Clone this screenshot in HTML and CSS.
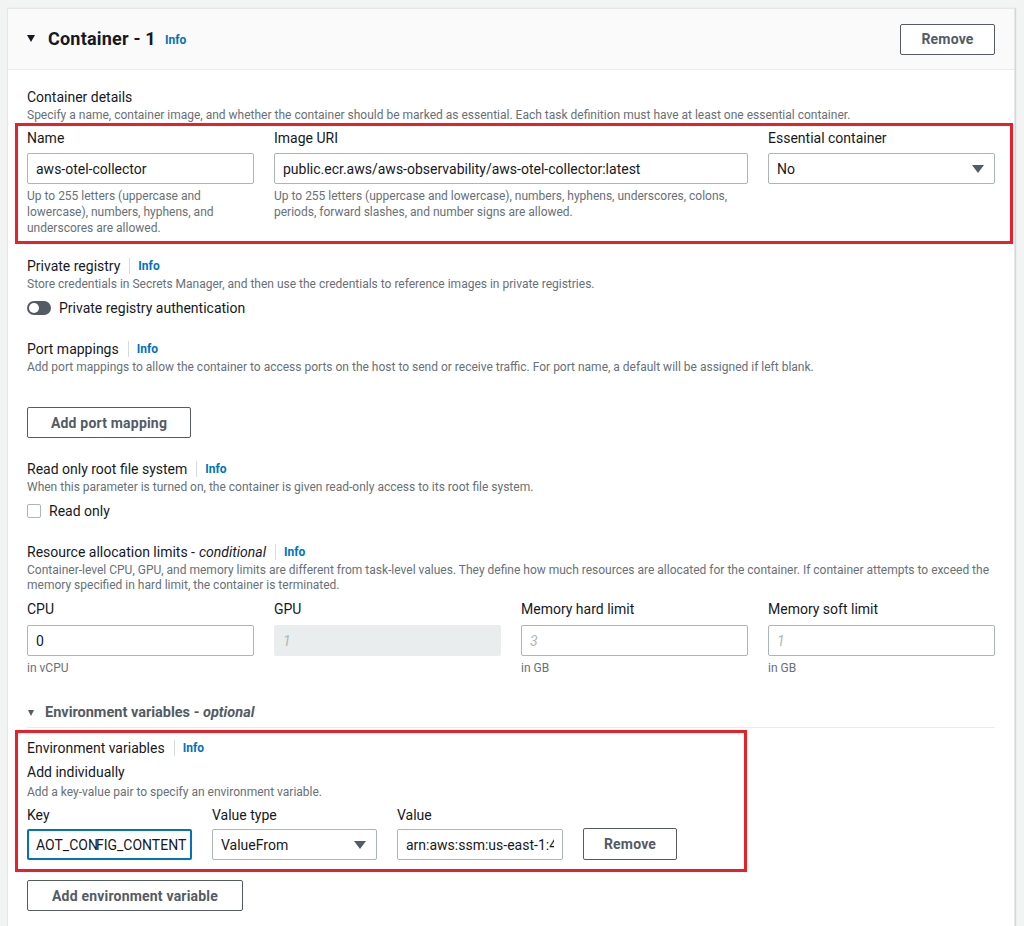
FILE: index.html
```html
<!DOCTYPE html>
<html lang="en">
<head>
    <meta charset="utf-8">
    <title>Container - 1</title>
    <link rel="stylesheet" href="styles.css">
</head>
<body>
    <div class="card">
        <div class="card-header">
            <div class="title">
                <span class="caret"></span>
                <h2>Container - 1</h2>
                <a class="info">Info</a>
            </div>
            <button class="btn">Remove</button>
        </div>

        <div class="card-body">
            <div class="section details">
                <div class="label">Container details</div>
                <div class="desc">Specify a name, container image, and whether the container should be marked as essential. Each task definition must have at least one essential container.</div>
            </div>

            <div class="highlight highlight-wide">
                <div class="grid">
                    <div class="field">
                        <div class="label">Name</div>
                        <input class="input" type="text" value="aws-otel-collector" readonly>
                        <div class="help">Up to 255 letters (uppercase and lowercase), numbers, hyphens, and underscores are allowed.</div>
                    </div>
                    <div class="field span-2">
                        <div class="label">Image URI</div>
                        <input class="input" type="text" value="public.ecr.aws/aws-observability/aws-otel-collector:latest" readonly>
                        <div class="help">Up to 255 letters (uppercase and lowercase), numbers, hyphens, underscores, colons, periods, forward slashes, and number signs are allowed.</div>
                    </div>
                    <div class="field">
                        <div class="label">Essential container</div>
                        <div class="select">
                            <span>No</span>
                            <svg class="arrow" width="12" height="8" viewBox="0 0 12 8"><path d="M0 0h12L6 8z" fill="#545b64"/></svg>
                        </div>
                    </div>
                </div>
            </div>

            <div class="section registry">
                <div class="label">Private registry <span class="sep"></span><a class="info">Info</a></div>
                <div class="desc">Store credentials in Secrets Manager, and then use the credentials to reference images in private registries.</div>
                <div class="option">
                    <span class="toggle"><span class="knob"></span></span>
                    <span>Private registry authentication</span>
                </div>
            </div>

            <div class="section ports">
                <div class="label">Port mappings <span class="sep"></span><a class="info">Info</a></div>
                <div class="desc">Add port mappings to allow the container to access ports on the host to send or receive traffic. For port name, a default will be assigned if left blank.</div>
                <button class="btn btn-block">Add port mapping</button>
            </div>

            <div class="section readonly">
                <div class="label">Read only root file system <span class="sep"></span><a class="info">Info</a></div>
                <div class="desc">When this parameter is turned on, the container is given read-only access to its root file system.</div>
                <div class="option">
                    <span class="checkbox"></span>
                    <span>Read only</span>
                </div>
            </div>

            <div class="section resources">
                <div class="label">Resource allocation limits - <em>conditional</em> <span class="sep"></span><a class="info">Info</a></div>
                <div class="desc desc-tight">Container-level CPU, GPU, and memory limits are different from task-level values. They define how much resources are allocated for the container. If container attempts to exceed the memory specified in hard limit, the container is terminated.</div>
                <div class="grid grid-resources">
                    <div class="field">
                        <div class="label">CPU</div>
                        <input class="input" type="text" value="0" readonly>
                        <div class="help">in vCPU</div>
                    </div>
                    <div class="field">
                        <div class="label">GPU</div>
                        <input class="input" type="text" placeholder="1" disabled>
                    </div>
                    <div class="field">
                        <div class="label">Memory hard limit</div>
                        <input class="input" type="text" placeholder="3" readonly>
                        <div class="help">in GB</div>
                    </div>
                    <div class="field">
                        <div class="label">Memory soft limit</div>
                        <input class="input" type="text" placeholder="1" readonly>
                        <div class="help">in GB</div>
                    </div>
                </div>
            </div>

            <div class="expander">
                <span class="caret caret-small"></span>
                <span>Environment variables - <em>optional</em></span>
            </div>

            <div class="highlight highlight-env">
                <div class="label">Environment variables <span class="sep"></span><a class="info">Info</a></div>
                <div class="label sub">Add individually</div>
                <div class="desc">Add a key-value pair to specify an environment variable.</div>
                <div class="env-row">
                    <div class="field">
                        <div class="label">Key</div>
                        <div class="input focused">AOT_CON<span class="text-caret"></span>FIG_CONTENT</div>
                    </div>
                    <div class="field">
                        <div class="label">Value type</div>
                        <div class="select">
                            <span>ValueFrom</span>
                            <svg class="arrow" width="12" height="8" viewBox="0 0 12 8"><path d="M0 0h12L6 8z" fill="#545b64"/></svg>
                        </div>
                    </div>
                    <div class="field">
                        <div class="label">Value</div>
                        <input class="input" type="text" value="arn:aws:ssm:us-east-1:4" readonly>
                    </div>
                    <div class="field field-btn">
                        <button class="btn">Remove</button>
                    </div>
                </div>
            </div>

            <button class="btn btn-block add-env">Add environment variable</button>
        </div>
    </div>
</body>
</html>
```

FILE: styles.css
```css
html,
body {
    padding: 0;
    margin: 0;
}

* {
    box-sizing: border-box;
}

body {
    background-color: #f2f3f3;
    font-family: Roboto, "Liberation Sans", sans-serif;
    color: #16191f;
    height: 926px;
    overflow: hidden;
}

.card {
    background-color: #fff;
    margin: 8px 0 0 7px;
    width: 1008px;
    min-height: 930px;
    border: 1px solid #e4e7e7;
    box-shadow: 1px 0 1px rgba(0, 28, 36, 0.12);
}

.card-header {
    background-color: #fafafa;
    height: 61px;
    padding: 0 19px;
    border-bottom: 1px solid #eaeded;
    display: flex;
    align-items: center;
    justify-content: space-between;
}

.title {
    display: flex;
    align-items: center;
    margin-top: -2px;
}

.title h2 {
    margin: 0 9px 0 13px;
    font-size: 18px;
    font-weight: 700;
    letter-spacing: 0.2px;
}

.caret {
    width: 0;
    height: 0;
    border-left: 4px solid transparent;
    border-right: 4px solid transparent;
    border-top: 7px solid #16191f;
}

.caret-small {
    border-left-width: 3.5px;
    border-right-width: 3.5px;
    border-top: 6px solid #545b64;
}

.info {
    color: #0073bb;
    font-size: 12px;
    font-weight: 700;
}

.title .info {
    margin-top: 3px;
}

.btn {
    font-family: inherit;
    font-size: 14px;
    font-weight: 700;
    color: #545b64;
    background-color: #fff;
    border: 1px solid #545b64;
    border-radius: 2px;
    height: 31px;
    padding: 0 20px;
    letter-spacing: 0.2px;
    cursor: pointer;
}

.card-header .btn {
    width: 95px;
}

.btn-block {
    display: block;
}

.card-body {
    padding: 0 19px;
}

.label {
    font-size: 14px;
    line-height: 20px;
    display: flex;
    align-items: center;
}

.label em {
    margin-left: 4px;
}

.sep {
    display: inline-block;
    width: 1px;
    height: 16px;
    background-color: #d5dbdb;
    margin: 0 8px 0 9px;
}

.desc {
    font-size: 12px;
    line-height: 16px;
    color: #687078;
}

.desc-tight {
    line-height: 15px;
    margin-top: 1px;
    max-width: 972px;
}

.details {
    margin-top: 17px;
}

.highlight {
    border: 3px solid #e8202a;
}

.highlight-wide {
    margin: 0 -18px 0 -12px;
    padding: 2px 15px 5px 9px;
}

.grid {
    display: grid;
    grid-template-columns: repeat(4, 227px);
    column-gap: 20px;
}

.span-2 {
    grid-column: span 2;
}

.field .label {
    margin-bottom: 5px;
}

.input,
.select {
    display: flex;
    align-items: center;
    width: 100%;
    height: 31px;
    padding: 0 8px;
    font-family: inherit;
    font-size: 14px;
    color: #16191f;
    background-color: #fff;
    border: 1px solid #aab7b8;
    border-radius: 2px;
    outline: 0;
}

.input::placeholder {
    color: #aab7b8;
    font-style: italic;
}

.input:disabled {
    background-color: #eaeded;
    border-color: #eaeded;
}

.select {
    justify-content: space-between;
    padding-right: 10px;
}

.focused {
    border: 2px solid #0073bb;
    padding-left: 7px;
    white-space: nowrap;
    overflow: hidden;
}

.text-caret {
    display: inline-block;
    width: 1px;
    height: 17px;
    margin: 0 -1px;
    background-color: #16191f;
}

.help {
    font-size: 12px;
    line-height: 16px;
    color: #687078;
    margin-top: 4px;
}

.registry {
    margin-top: 12px;
}

.option {
    display: flex;
    align-items: center;
    font-size: 14px;
    line-height: 20px;
    margin-top: 6px;
}

.toggle {
    width: 24px;
    height: 14px;
    border-radius: 7px;
    background-color: #545b64;
    padding: 2px;
    margin-right: 8px;
    display: flex;
}

.knob {
    width: 10px;
    height: 10px;
    border-radius: 50%;
    background-color: #fff;
}

.checkbox {
    width: 14px;
    height: 14px;
    border: 1px solid #aab7b8;
    border-radius: 2px;
    margin-right: 8px;
}

.ports {
    margin-top: 21px;
}

.ports .btn {
    margin-top: 32px;
    width: 164px;
}

.readonly {
    margin-top: 21px;
}

.resources {
    margin-top: 21px;
}

.grid-resources {
    margin-top: 6px;
}

.grid-resources .label {
    margin-bottom: 6px;
}

.grid-resources .help {
    margin-top: 4px;
}

.expander {
    display: flex;
    align-items: center;
    margin-top: 27px;
    padding-bottom: 4px;
    border-bottom: 1px solid #eaeded;
    font-size: 14.5px;
    line-height: 20px;
    font-weight: 700;
    color: #545b64;
}

.expander .caret {
    margin: 0 11px 0 1px;
}

.highlight-env {
    width: 732px;
    margin: 2px 0 0 -12px;
    padding: 5px 9px 9px 9px;
}

.sub {
    margin-top: 4px;
}

.highlight-env .desc {
    margin-top: 2px;
}

.env-row {
    display: grid;
    grid-template-columns: 165px 165px 166px 94px;
    column-gap: 20px;
    align-items: end;
    margin-top: 5px;
}

.env-row .label {
    margin-bottom: 4px;
}

.field-btn .btn {
    width: 94px;
    height: 32px;
    padding: 0;
}

.add-env {
    margin-top: 8px;
    width: 216px;
}
```
